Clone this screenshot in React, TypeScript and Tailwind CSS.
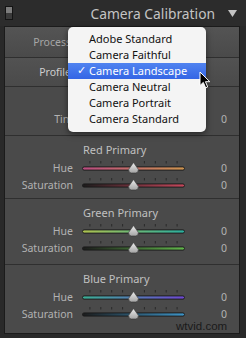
import React from "react";

type Track = { from: string; to: string };

const sections: { title: string; hue: Track; sat: Track }[] = [
  {
    title: "Red Primary",
    hue: { from: "#b84c80", to: "#cc9450" },
    sat: { from: "#1c1c1c", to: "#c4485c" },
  },
  {
    title: "Green Primary",
    hue: { from: "#aec250", to: "#2cae9e" },
    sat: { from: "#1c1c1c", to: "#62b64c" },
  },
  {
    title: "Blue Primary",
    hue: { from: "#3cae94", to: "#6e48d0" },
    sat: { from: "#1c1c1c", to: "#3e94c6" },
  },
];

const profiles = [
  "Adobe Standard",
  "Camera Faithful",
  "Camera Landscape",
  "Camera Neutral",
  "Camera Portrait",
  "Camera Standard",
];

function Slider({ id, track }: { id: string; track: Track }) {
  const ticks = [-4, -3, -2, -1, 1, 2, 3, 4];
  return (
    <svg width={103} height={17} viewBox="0 0 103 17" className="block">
      <defs>
        <linearGradient id={`t-${id}`} x1="0" x2="1" y1="0" y2="0">
          <stop offset="0" stopColor={track.from} />
          <stop offset="1" stopColor={track.to} />
        </linearGradient>
        <linearGradient id={`k-${id}`} x1="0" x2="0" y1="0" y2="1">
          <stop offset="0" stopColor="#ececec" />
          <stop offset="1" stopColor="#a4a4a4" />
        </linearGradient>
      </defs>
      {ticks.map((k) => (
        <rect
          key={k}
          x={51 + k * 10.9}
          y={1}
          width={1}
          height={2.5}
          fill="#2a2a2a"
        />
      ))}
      <rect
        x={0.5}
        y={6.9}
        width={102}
        height={3.2}
        rx={1.6}
        fill={`url(#t-${id})`}
        stroke="#181818"
        strokeWidth={0.9}
      />
      <path
        d="M51.5 2.5 L56.3 9.3 Q56.8 13 53.6 13 L49.4 13 Q46.2 13 46.7 9.3 Z"
        fill={`url(#k-${id})`}
        stroke="#333"
        strokeWidth={0.6}
      />
    </svg>
  );
}

function Row({
  label,
  children,
}: {
  label: string;
  children?: React.ReactNode;
}) {
  return (
    <div className="flex h-[17px] items-center">
      <div className="w-[68px] text-right text-[10.5px] leading-none text-[#b2b2b2]">
        {label}
      </div>
      <div className="ml-[9px] w-[103px]">{children}</div>
      <div className="w-[42px] text-right text-[10.5px] leading-none text-[#b2b2b2]">
        0
      </div>
    </div>
  );
}

export default function App() {
  return (
    <div className="relative h-[338px] w-[246px] overflow-hidden bg-[#292929] font-['Noto_Sans',sans-serif]">
      {/* panel header */}
      <header className="flex h-[26px] items-center pl-[5px] pr-[9px] bg-[#2c2c2c]">
        <div className="flex h-[14px] w-[8px] flex-col border border-[#141414]">
          <div className="flex-1 bg-[#7c7c7c]" />
          <div className="flex-1 bg-[#3a3a3a]" />
        </div>
        <span className="ml-auto pt-[2px] text-[13.8px] leading-none text-[#c4c4c4]">
          Camera Calibration
        </span>
        <svg width={9} height={7} viewBox="0 0 9 7" className="ml-[13px] mt-[1px]">
          <path d="M0 0 L9 0 L4.5 7 Z" fill="#c4c4c4" />
        </svg>
      </header>

      {/* panel body */}
      <div className="mx-[4px] h-[308px] w-[236px] border border-[#1b1b1b] bg-[#4a4a4a]">
        <div className="flex h-[31px] items-center border-b border-[#2f2f2f] bg-gradient-to-b from-[#545454] to-[#4a4a4a]">
          <div className="w-[66px] text-right text-[10.5px] leading-none text-[#a6a6a6]">
            Process
          </div>
        </div>
        <div className="flex h-[29px] items-center border-b border-[#2f2f2f] bg-gradient-to-b from-[#525252] to-[#4a4a4a]">
          <div className="w-[66px] text-right text-[10.5px] leading-none text-[#cecece]">
            Profile
          </div>
        </div>
        <div className="h-[49px] border-b border-[#2f2f2f] pt-[24px]">
          <Row label="Tint" />
        </div>
        {sections.map((s, i) => (
          <div
            key={s.title}
            className={
              i === 0
                ? "h-[63px] border-b border-[#2f2f2f] pt-[6px]"
                : i === 1
                ? "h-[66px] border-b border-[#2f2f2f] pt-[6px]"
                : "h-[63px] pt-[6px]"
            }
          >
            <div className="h-[16px] pl-[78px] text-[11px] leading-[16px] text-[#c0c0c0]">
              {s.title}
            </div>
            <div className="mt-[2px]">
              <Row label="Hue">
                <Slider id={`h${i}`} track={s.hue} />
              </Row>
              <Row label="Saturation">
                <Slider id={`s${i}`} track={s.sat} />
              </Row>
            </div>
          </div>
        ))}
      </div>

      {/* profile popup menu */}
      <div className="absolute left-[68px] top-[27px] h-[105px] w-[138px] rounded-[5px] bg-[#f4f4f4] py-[4px] shadow-[0_2px_6px_rgba(0,0,0,0.5)]">
        {profiles.map((p) => {
          const on = p === "Camera Landscape";
          return (
            <div
              key={p}
              className={
                on
                  ? "relative flex h-[16px] items-center bg-gradient-to-b from-[#5083f0] to-[#3465e5] pl-[21px] text-[11px] text-white"
                  : "relative flex h-[16px] items-center pl-[21px] text-[11px] text-[#111]"
              }
            >
              {on && (
                <span className="absolute left-[9px] top-0 font-['DejaVu_Sans',sans-serif] text-[11px] leading-[16px]">
                  ✓
                </span>
              )}
              {p}
            </div>
          );
        })}
      </div>

      {/* mouse cursor */}
      <svg
        width={12}
        height={18}
        viewBox="0 0 12 18"
        className="absolute left-[199px] top-[71px]"
      >
        <path
          d="M1 1 L1 14.5 L4.3 11.4 L6.6 16.8 L8.7 15.9 L6.5 10.7 L10.8 10.7 Z"
          fill="#000"
          stroke="#fff"
          strokeWidth={1}
          strokeLinejoin="round"
        />
      </svg>

      <div className="absolute left-[176px] top-[320px] font-['Liberation_Sans',sans-serif] text-[11.5px] leading-[13px] text-[#1a1a1a]">
        wtvid.com
      </div>
    </div>
  );
}
